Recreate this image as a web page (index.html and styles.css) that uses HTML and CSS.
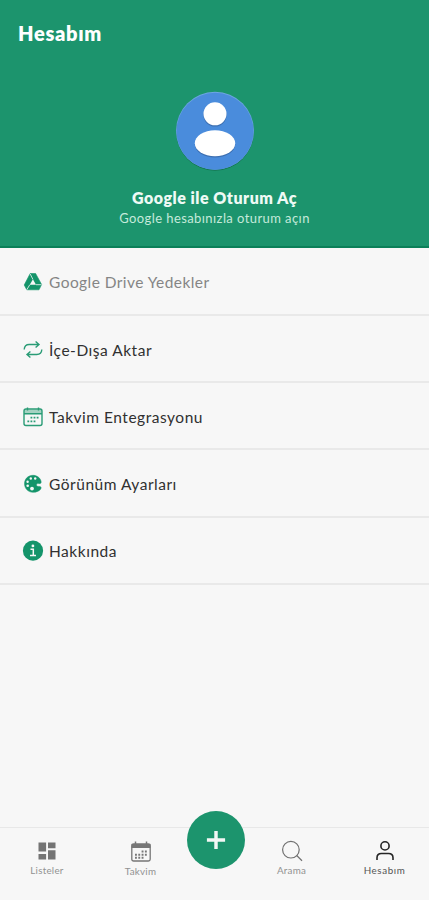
FILE: index.html
```html
<!DOCTYPE html>
<html lang="tr">

<head>
    <meta charset="UTF-8">
    <meta name="viewport" content="width=device-width, initial-scale=1.0">
    <title>Hesabım</title>
    <link rel="stylesheet" href="styles.css">
</head>

<body>
    <header class="header">
        <h1>Hesabım</h1>
        <div class="profile">
            <svg class="avatar" viewBox="0 0 80 80">
                <circle cx="40" cy="41" r="38.8" fill="#147653" />
                <circle cx="40" cy="39.800" r="39" fill="#6da5e2" />
                <circle cx="40" cy="40.2" r="38.5" fill="#4a8cdc" />
                <circle cx="40" cy="24" r="11.6" fill="#3d70b2" />
                <circle cx="40" cy="22.8" r="11.5" fill="#fff" />
                <ellipse cx="40" cy="53.5" rx="20.2" ry="13" fill="#3d70b2" />
                <ellipse cx="40" cy="52.300" rx="20.2" ry="13" fill="#fff" />
            </svg>
            <h2>Google ile Oturum Aç</h2>
            <p>Google hesabınızla oturum açın</p>
        </div>
    </header>

    <main class="menu">
        <a class="row disabled">
            <svg class="icon" viewBox="0 0 22 22">
                <path d="M8.2 2.500h5.400l6 11-2.600 5.300H4.800L2.200 14z" fill="#14946a" stroke="#14946a" stroke-width=".6" stroke-linejoin="round" />
                <path d="M10.900 8.300l3.100 5.400H7.800z" fill="#f7f7f7" />
                <path d="M8.200 3l2.700 5.300M14 13.700h5.500M7.800 13.700l-3 5" stroke="#f7f7f7" stroke-width=".8" fill="none" />
            </svg>
            <span>Google Drive Yedekler</span>
        </a>
        <a class="row">
            <svg class="icon line" viewBox="0 0 22 22">
                <path d="M2.2 10.5C2.4 7.2 4.4 5.5 7.2 5.5h9.2M13.6 2.5l3.4 3-3.4 3M19.8 10.5c-.2 3.5-2.2 5-5 5H5.5M8.4 12.5l-3.4 3 3.4 3" />
            </svg>
            <span>İçe-Dışa Aktar</span>
        </a>
        <a class="row">
            <svg class="icon line" viewBox="0 0 22 22">
                <path d="M2 3.500h18v4H2z" fill="#a5d2c2" stroke="none" />
                <rect x="2" y="3" width="18" height="16.500" rx="2" />
                <path d="M2 7.800h18M5.500 1.500v3M16.500 1.500v3" />
                <path d="M8.500 11.700h8.500M5.400 15.300h8.500" stroke-width="1.700" stroke-dasharray="1.800 1.300" />
            </svg>
            <span>Takvim Entegrasyonu</span>
        </a>
        <a class="row">
            <svg class="icon" viewBox="0 0 22 22">
                <path d="M11 2.300C5.800 2.300 2.500 6.200 2.500 10.800c0 4.800 3.800 8.500 8.400 8.500 3.700 0 7.300-1.500 8.100-3.900.5-1.600-.8-2.100-2.200-2-1.500.1-2.300-.4-2.300-1.400 0-1.100 1-1.600 2.300-1.400 1.800.3 2.600-.5 2.300-2.100-.8-3.700-4.200-6.200-8.100-6.200z" fill="#14946a" stroke="#14946a" stroke-width=".5" />
                <g fill="#f7f7f7">
                    <circle cx="8.800" cy="5.500" r="1.200" />
                    <circle cx="13.200" cy="5.500" r="1.200" />
                    <circle cx="5.600" cy="8.700" r="1.200" />
                    <circle cx="5.700" cy="12.700" r="1.300" />
                    <circle cx="10" cy="15.600" r="1.900" />
                </g>
            </svg>
            <span>Görünüm Ayarları</span>
        </a>
        <a class="row">
            <svg class="icon" viewBox="0 0 22 22">
                <circle cx="11" cy="10.700" r="10.100" fill="#14946a" />
                <circle cx="10.900" cy="5.900" r="1.400" fill="#f7f7f7" />
                <path d="M8.500 9.300h2.800v6M8 15.500h6" stroke="#f7f7f7" stroke-width="1.500" fill="none" />
            </svg>
            <span>Hakkında</span>
        </a>
    </main>

    <nav class="tabbar">
        <a class="tab">
            <svg viewBox="0 0 22 22" fill="#747474">
                <path d="M2.500 2.500h7.600v9H2.500zM12 2.500h7.500v5.700H12zM2.500 14h7.600v5.600H2.500zM12 10.300h7.500v9.300H12z" />
            </svg>
            <span>Listeler</span>
        </a>
        <a class="tab low">
            <svg viewBox="0 0 22 22" fill="none" stroke="#777">
                <rect x="1.800" y="3" width="18.400" height="17" rx="1.800" stroke-width="1.300" />
                <path d="M1.500 5h19" stroke-width="4" />
                <path d="M5.500 .5v4M16.500 .5v4" stroke-width="1.500" />
                <path d="M11.600 10.500h6M5 13.700h12.300M5 16.800h9" stroke-width="1.900" stroke-dasharray="1.900 1.400" />
            </svg>
            <span>Takvim</span>
        </a>
        <a class="add">
            <svg viewBox="0 0 22 22">
                <path d="M11 1v20M1 11h20" stroke="#f2f7f5" stroke-width="3.800" />
            </svg>
        </a>
        <a class="tab">
            <svg viewBox="0 0 22 22" fill="none" stroke="#707070" stroke-width="1.200">
                <circle cx="9.900" cy="9.700" r="8.300" />
                <path d="M15.700 15.500l5.300 5.200" />
            </svg>
            <span>Arama</span>
        </a>
        <a class="tab active">
            <svg viewBox="0 0 22 22" fill="none" stroke="#252525" stroke-width="1.600">
                <circle cx="11" cy="5.900" r="4.100" />
                <path d="M3 20v-2.200c0-2.700 1.700-4.300 4.400-4.300h7.200c2.700 0 4.400 1.600 4.400 4.300V20" />
            </svg>
            <span>Hesabım</span>
        </a>
    </nav>
</body>

</html>
```
FILE: styles.css
```css
* {
    box-sizing: border-box;
}

body {
    margin: 0;
    height: 900px;
    display: flex;
    flex-direction: column;
    background-color: #f7f7f7;
    font-family: Lato, "Noto Sans", sans-serif;
    color: #303030;
    overflow: hidden;
}

.header {
    height: 248px;
    background-color: #1c946d;
    border-bottom: 2px solid #0b8059;
    color: #fff;
}

h1 {
    margin: 0;
    padding: 20px 0 0 18px;
    font-size: 20px;
    line-height: 26px;
    font-weight: 800;
    letter-spacing: 0.7px;
}

.profile {
    display: flex;
    flex-direction: column;
    align-items: center;
    padding-top: 45px;
}

.avatar {
    width: 80px;
    height: 80px;
}

h2 {
    margin: 16px 0 0;
    font-size: 16px;
    line-height: 22px;
    font-weight: 800;
    letter-spacing: 0.5px;
    color: #eefaf5;
}

.profile p {
    margin: 0;
    font-size: 13px;
    line-height: 18px;
    letter-spacing: 0.42px;
    color: #c5eadb;
}

.menu {
    flex: 1;
}

.row {
    display: flex;
    align-items: center;
    gap: 5px;
    height: 67.2px;
    padding: 2px 22px 0;
    border-bottom: 2px solid #e9e9e9;
    font-size: 15.5px;
    letter-spacing: 0.52px;
}

/* first row carries the extra pixel under the header */
.row.disabled {
    height: 68px;
    letter-spacing: 0.44px;
    color: #858585;
}

.icon {
    width: 22px;
    height: 22px;
}

.line {
    fill: none;
    stroke: #2a9c76;
    stroke-width: 1.4;
}

.tabbar {
    display: grid;
    grid-template-columns: 94px 93px 58px 93px 91px;
    height: 73px;
    border-top: 1px solid #e8e8e8;
}

.tab {
    display: flex;
    flex-direction: column;
    align-items: center;
    padding-top: 12px;
    font-size: 9.8px;
    line-height: 14px;
    letter-spacing: 0.25px;
    color: #929292;
}

.tab svg {
    width: 22px;
    height: 22px;
    margin-bottom: 1px;
}

.tab.low {
    padding-top: 13px;
}

.tab.active {
    padding-left: 2px;
    letter-spacing: 0.6px;
    color: #555;
}

.add {
    display: flex;
    align-items: center;
    justify-content: center;
    width: 58px;
    height: 58px;
    margin-top: -17px;
    border-radius: 50%;
    background-color: #1c946d;
}

.add svg {
    width: 20px;
    height: 20px;
}
```
